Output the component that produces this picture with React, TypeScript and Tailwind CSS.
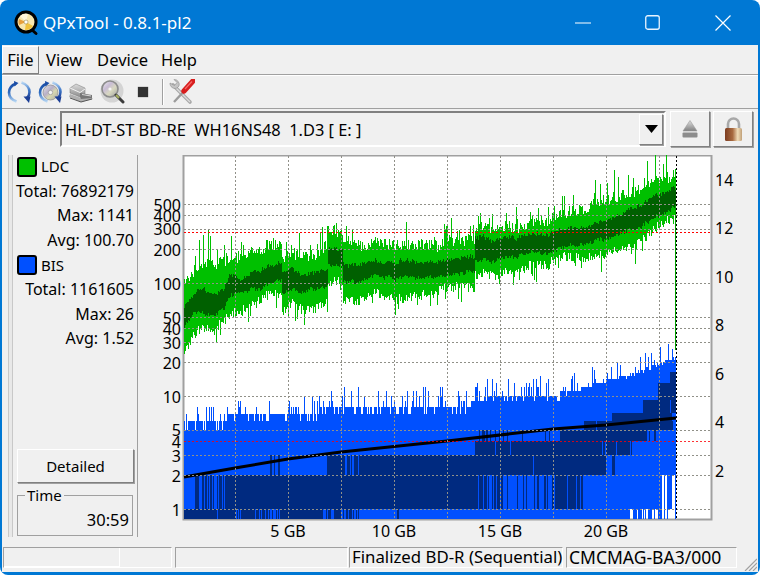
import { useId } from "react";

// seeded so the traces stay the same on every load
const makeRand = (seed: number) => () => {
  seed |= 0;
  seed = (seed + 0x6d2b79f5) | 0;
  let t = Math.imul(seed ^ (seed >>> 15), 1 | seed);
  t = (t + Math.imul(t ^ (t >>> 7), 61 | t)) ^ t;
  return ((t ^ (t >>> 14)) >>> 0) / 4294967296;
};

const lerp = (keys: number[][], x: number, col: number) => {
  for (let i = 1; i < keys.length; i++) {
    if (x <= keys[i][0]) {
      const a = keys[i - 1];
      const b = keys[i];
      const f = b[0] === a[0] ? 1 : (x - a[0]) / (b[0] - a[0]);
      return a[col] + (b[col] - a[col]) * f;
    }
  }
  return keys[keys.length - 1][col];
};

// x, dark top, dark bottom, light top, light bottom
const ldcKeys = [
  [184, 307, 328, 285, 354],
  [193, 297, 315, 272, 338],
  [203, 288, 312, 262, 328],
  [213, 295, 317, 265, 328],
  [223, 290, 309, 262, 322],
  [230, 273, 295, 255, 314],
  [240, 280, 292, 258, 312],
  [257, 270, 289, 250, 299],
  [277, 263, 280, 243, 289],
  [281, 263, 280, 243, 289],
  [282, 273, 294, 257, 315],
  [290, 268, 289, 253, 302],
  [303, 275, 292, 257, 309],
  [313, 273, 289, 257, 309],
  [327, 267, 285, 243, 302],
  [328, 247, 264, 228, 280],
  [342, 248, 264, 230, 280],
  [343, 263, 280, 240, 299],
  [360, 263, 280, 245, 300],
  [377, 263, 277, 243, 293],
  [400, 262, 278, 245, 300],
  [440, 262, 277, 245, 290],
  [474, 258, 274, 240, 288],
  [475, 237, 260, 226, 274],
  [520, 238, 257, 228, 272],
  [560, 232, 250, 217, 260],
  [600, 220, 237, 200, 252],
  [640, 205, 227, 188, 242],
  [675, 187, 207, 174, 214],
];

const ldcSpikes: Record<number, number> = {
  203: 235, 208: 229, 327: 226, 331: 232, 470: 226, 481: 222, 492: 214, 506: 213, 530: 212,
  548: 207, 572: 206, 595: 180, 618: 177, 633: 178, 644: 178, 652: 182, 663: 164, 667: 172,
};

const blueBase = [
  [184, 5.4],
  [210, 6],
  [230, 6.6],
  [300, 7],
  [340, 8],
  [470, 8.4],
  [476, 9.4],
  [560, 10.5],
  [600, 13],
  [630, 15.5],
  [655, 19],
  [676, 22],
];

// dark blue bands: y top, y bottom, x from, x to, how often a column is filled
const blueBands = [
  [509, 519, 184, 270, 0.93],
  [509, 519, 270, 281, 0.45],
  [509, 519, 281, 323, 1],
  [509, 519, 323, 360, 0.45],
  [509, 519, 397, 399, 1],
  [475, 509, 184, 194, 0],
  [475, 509, 194, 225, 0.5],
  [475, 509, 225, 475, 1],
  [475, 509, 475, 500, 0.6],
  [475, 509, 500, 552, 0.2],
  [475, 509, 552, 583, 0.85],
  [455, 475, 270, 280, 0.6],
  [455, 475, 323, 328, 0.5],
  [455, 475, 328, 345, 0.96],
  [455, 475, 345, 360, 0.55],
  [455, 475, 360, 606, 0.98],
  [455, 475, 612, 617, 0.5],
  [441, 455, 475, 630, 0.98],
  [441, 455, 630, 635, 0.5],
  [430, 441, 478, 497, 0.6],
  [430, 441, 497, 560, 0.07],
  [430, 441, 560, 647, 1],
  [430, 441, 647, 658, 0.5],
  [421, 430, 584, 600, 0.95],
  [421, 430, 600, 673, 1],
  [413, 421, 612, 672, 1],
  [400, 413, 643, 676, 0.98],
  [383, 400, 658, 676, 1],
  [372, 383, 670, 676, 1],
];

const buildTraces = () => {
  const r = makeRand(77);
  let light = "";
  let dark = "";
  let blue = "";
  let navy = "";
  let wobble = 0;
  for (let x = 184; x < 676; x++) {
    // slow drift so the bands are not too even
    wobble = wobble * 0.9 + (r() - 0.5) * 2.4;
    let top = lerp(ldcKeys, x, 3) + wobble + (r() - 0.5) * 12;
    if (r() > 0.85) top -= r() * 24;
    if (ldcSpikes[x]) top = ldcSpikes[x];
    let bot = lerp(ldcKeys, x, 4) + wobble + (r() - 0.5) * 10;
    if (r() > 0.88) bot += r() * 16;
    const dTop = lerp(ldcKeys, x, 1) + wobble + (r() - 0.5) * 4;
    const dBot = lerp(ldcKeys, x, 2) + wobble + (r() - 0.5) * 4;
    light += `M${x + 0.5} ${Math.round(top)}V${Math.round(bot)}`;
    dark += `M${x + 0.5} ${Math.round(dTop)}V${Math.round(dBot)}`;

    const base = lerp(blueBase, x, 1);
    const roll = r();
    let v = base;
    if (roll < 0.2) v = base - 1;
    else if (roll > 0.75) v = base * (1 + r() * 0.45);
    if (x === 672) v = 26;
    const blueTop = Math.round(509 - 113 * Math.log10(Math.max(5, Math.round(v))));
    let blueBot = 519;
    if (x >= 630 && r() < 0.4) blueBot = 509;
    if (x >= 662 && r() < 0.55) blueBot = 475;
    blue += `M${x + 0.5} ${blueTop}V${blueBot}`;
    blueBands.forEach(([y0, y1, from, to, p]) => {
      if (x >= from && x < to && r() < p) navy += `M${x + 0.5} ${y0}V${y1}`;
    });
  }
  return { light, dark, blue, navy };
};

const traces = buildTraces();

const leftTicks = [
  [500, 205], [400, 216], [300, 229], [200, 250], [100, 284], [50, 318], [40, 329], [30, 343],
  [20, 363], [10, 397], [5, 430], [4, 442], [3, 456], [2, 476], [1, 510],
];
const rightTicks = [[14, 180], [12, 228], [10, 277], [8, 325], [6, 374], [4, 422], [2, 471]];
const bottomTicks = [[5, 288], [10, 394], [15, 500], [20, 606]];
const gridY = [204, 215, 229, 249, 283, 317, 328, 342, 362, 396, 430, 455, 475, 509];
const gridX = [235, 288, 341, 394, 447, 500, 553, 606, 659];

const Chart = () => (
  <svg viewBox="140 155 616 385" className="w-[616px] h-[385px] block" fontSize={16}>
    <rect x={183.5} y={155.5} width={528} height={364} fill="#ffffff" stroke="#a0a0a0" strokeWidth={2} />
    <g shapeRendering="crispEdges" fill="none">
      <path d={traces.light} stroke="#00c000" />
      <path d={traces.dark} stroke="#006000" />
      <path d="M675.5 205V350" stroke="#00a000" />
      <path d={traces.blue} stroke="#0050ff" />
      <path d={traces.navy} stroke="#002a80" />
    </g>
    <path
      d="M184 477L235 468L288 459L341 452L447 441L553 429L606 425L676 418"
      fill="none"
      stroke="#000000"
      strokeWidth={3}
    />
    <g shapeRendering="crispEdges" stroke="#909088" strokeDasharray="2 2" fill="none">
      {gridY.map((y) => (
        <path key={y} d={`M184 ${y + 0.5}H711`} />
      ))}
      {gridX.map((x) => (
        <path key={x} d={`M${x + 0.5} 156V519`} />
      ))}
    </g>
    <g shapeRendering="crispEdges" stroke="#ff0000" strokeDasharray="2 2" fill="none">
      <path d="M184 232.5H711" />
      <path d="M184 441.5H711" strokeOpacity={0.8} />
    </g>
    <path d="M676.5 156V519" stroke="#000000" strokeDasharray="2 2" shapeRendering="crispEdges" />
    {leftTicks.map(([n, y]) => (
      <text key={n} x={181} y={y + 5.5} textAnchor="end">{n}</text>
    ))}
    {rightTicks.map(([n, y]) => (
      <text key={n} x={715} y={y + 5.5}>{n}</text>
    ))}
    {bottomTicks.map(([n, x]) => (
      <text key={n} x={x} y={536.5} textAnchor="middle">{n} GB</text>
    ))}
  </svg>
);

const AppLogo = () => (
  <svg width="26" height="26" viewBox="0 0 26 26" className="block">
    <path d="M17 19l5 4.5" stroke="#000" strokeWidth={3} strokeLinecap="round" />
    <circle cx="12" cy="12" r="10" fill="#f7e7b0" stroke="#000" strokeWidth={3} />
    <path d="M12 12L6 6A9 9 0 0 1 14 4Z" fill="#fff6dc" />
    <path d="M12 12L19 16A9 9 0 0 1 11 20Z" fill="#f0c23c" />
    <path d="M12 12L5 15A9 9 0 0 1 5 9Z" fill="#e8a03c" />
    <circle cx="12" cy="12" r="2" fill="#fff" stroke="#9a8a50" strokeWidth={0.6} />
  </svg>
);

const Arcs = () => {
  const id = useId();
  return (
    <>
      <defs>
        <linearGradient id={`${id}a`} x1="0" y1="0" x2="0" y2="1">
          <stop offset="0" stopColor="#1c4ea6" />
          <stop offset="0.5" stopColor="#2f6cc0" />
          <stop offset="1" stopColor="#b4d4f2" />
        </linearGradient>
        <linearGradient id={`${id}b`} x1="0" y1="0" x2="0" y2="1">
          <stop offset="0" stopColor="#b4d4f2" />
          <stop offset="0.5" stopColor="#3f78c8" />
          <stop offset="1" stopColor="#1c3f96" />
        </linearGradient>
      </defs>
      <path d="M9 3.5C4 5.5 2 9 2 12.5C2 16.5 5 20 9.5 21.5" fill="none" stroke={`url(#${id}a)`} strokeWidth={2.6} />
      <path d="M7 1L11.500 3L7.500 6.500Z" fill="#1c4ea6" />
      <path d="M14.5 2.5C19.5 4 22.5 8 22.5 12C22.5 14.5 21.5 16.5 20 18" fill="none" stroke={`url(#${id}b)`} strokeWidth={2.6} />
      <path d="M16.500 16.500L23.500 16.500L22 23Z" fill="#1c3f96" />
    </>
  );
};

const RefreshIcon = () => (
  <svg width="25" height="25" viewBox="0 0 25 25" className="block">
    <Arcs />
  </svg>
);

const DiscRefreshIcon = () => {
  const id = useId();
  return (
    <svg width="25" height="25" viewBox="0 0 25 25" className="block">
      <defs>
        <linearGradient id={id} x1="0" y1="0" x2="1" y2="1">
          <stop offset="0" stopColor="#e8e8e8" />
          <stop offset="0.4" stopColor="#b8b0c8" />
          <stop offset="0.6" stopColor="#d8d8b0" />
          <stop offset="1" stopColor="#a8a8a8" />
        </linearGradient>
      </defs>
      <circle cx="12.5" cy="12.5" r="7.5" fill={`url(#${id})`} stroke="#8a8a8a" strokeWidth={0.7} />
      <circle cx="12.5" cy="12.5" r="2.2" fill="#f4f4f4" stroke="#8a8a8a" strokeWidth={0.6} />
      <Arcs />
    </svg>
  );
};

const DriveIcon = () => {
  const id = useId();
  return (
    <svg width="26" height="25" viewBox="0 0 26 25" className="block">
      <defs>
        <linearGradient id={id} x1="0" y1="0" x2="0" y2="1">
          <stop offset="0" stopColor="#dcdcdc" />
          <stop offset="1" stopColor="#8c8c8c" />
        </linearGradient>
      </defs>
      <path d="M1 17l12 5 12-3-2-2-10 1-11-4Z" fill="#b0b0b0" />
      <path d="M2 8l6-4 9 4v6l-5 3-10-4Z" fill={`url(#${id})`} stroke="#777" strokeWidth={0.5} />
      <path d="M2 8l10 4.500 5-3.500" fill="none" stroke="#f2f2f2" strokeWidth={1} />
      <path d="M12 13l12 2v3l-11 1-1-2Z" fill="#767676" />
      <path d="M14 14.500l9 1.500" stroke="#d8d8d8" strokeWidth={1} />
      <path d="M2 18l11 4 11-3" fill="none" stroke="#555" strokeWidth={1} />
    </svg>
  );
};

const ScanIcon = () => {
  const id = useId();
  return (
    <svg width="26" height="26" viewBox="0 0 26 26" className="block">
      <defs>
        <linearGradient id={id} x1="0" y1="0" x2="1" y2="1">
          <stop offset="0" stopColor="#f4f4f4" />
          <stop offset="0.35" stopColor="#c8bcd4" />
          <stop offset="0.6" stopColor="#d8d8c0" />
          <stop offset="1" stopColor="#9c9c9c" />
        </linearGradient>
      </defs>
      <circle cx="13" cy="12" r="11.5" fill="#d4d4d4" />
      <circle cx="11" cy="10" r="8" fill={`url(#${id})`} stroke="#8c8c8c" strokeWidth={1.6} />
      <circle cx="11" cy="10" r="1.6" fill="#f4f4f4" />
      <path d="M17 16l7 7" stroke="#3c3c3c" strokeWidth={3} strokeLinecap="round" />
      <path d="M17 16l3 3" stroke="#a8b060" strokeWidth={2} />
    </svg>
  );
};

const ToolsIcon = () => (
  <svg width="26" height="26" viewBox="0 0 26 26" className="block">
    <path d="M4 6l17 17" stroke="#a8a8a8" strokeWidth={3.6} strokeLinecap="round" />
    <path d="M4 6l17 17" stroke="#dcdcdc" strokeWidth={1.2} />
    <path d="M1 4a5 5 0 0 0 7 5l2-2a5 5 0 0 0-5-6.500l3 3-2.500 3Z" fill="#c4c4c4" stroke="#8c8c8c" strokeWidth={0.6} />
    <path d="M19 8L5 23" stroke="#9c9c9c" strokeWidth={2.4} />
    <path d="M15 12L24 2" stroke="#d81e1e" strokeWidth={5.4} strokeLinecap="round" />
    <path d="M16 10L23 2.500" stroke="#f46a6a" strokeWidth={1.2} />
  </svg>
);

const EjectIcon = () => {
  const id = useId();
  return (
    <svg width="16" height="18" viewBox="0 0 16 18" className="block">
      <defs>
        <linearGradient id={id} x1="0" y1="0" x2="0" y2="1">
          <stop offset="0" stopColor="#e0e0e0" />
          <stop offset="1" stopColor="#808080" />
        </linearGradient>
      </defs>
      <path d="M8 0.500L15 11H1Z" fill={`url(#${id})`} stroke="#9a9a9a" strokeWidth={0.6} />
      <rect x="0.500" y="12.500" width="15" height="5" rx="1" fill="#8c8c8c" />
    </svg>
  );
};

const LockIcon = () => {
  const id = useId();
  return (
    <svg width="19" height="25" viewBox="0 0 19 25" className="block">
      <defs>
        <linearGradient id={id} x1="0" y1="0" x2="1" y2="0">
          <stop offset="0" stopColor="#7c3c20" />
          <stop offset="0.45" stopColor="#a86a40" />
          <stop offset="0.75" stopColor="#f0dcb8" />
          <stop offset="1" stopColor="#c0a078" />
        </linearGradient>
      </defs>
      <path d="M4 11V7a5.500 5.500 0 0 1 11 0v4" fill="none" stroke="#a8a8a8" strokeWidth={2.6} />
      <rect x="1" y="11" width="17" height="13" rx="1.500" fill={`url(#${id})`} />
    </svg>
  );
};

const StatRow = ({ label, value }: { label: string; value: string }) => (
  <div className="h-[24.6px] flex items-center justify-end pr-[3px] pb-[2px] whitespace-nowrap text-[16px]">
    {label}: {value}
  </div>
);

const LegendRow = ({ color, name }: { color: string; name: string }) => (
  <div className="h-[24.6px] flex items-center gap-[4px] pl-[4px] pb-[1px]">
    <div className={`w-[20px] h-[20px] rounded-[3px] border-2 border-black ${color}`} />
    <span>{name}</span>
  </div>
);

const raised = "border border-t-white border-l-white border-r-[#808080] border-b-[#808080] shadow-[1px_1px_0_#a0a0a0]";
const sunken = "border border-t-[#a0a0a0] border-l-[#a0a0a0] border-r-white border-b-white";

export default function App() {
  return (
    <div className="w-[760px] h-[575px] bg-white overflow-hidden font-['Noto_Sans',sans-serif] text-[15px] leading-none text-black">
      <div className="h-full rounded-[8px] bg-[#0078d4] flex flex-col px-[2px] pb-[3px]">
        {/* title bar */}
        <div className="h-[45px] shrink-0 flex items-center text-white">
          <div className="ml-[12px] mr-[3px]">
            <AppLogo />
          </div>
          <span className="text-[17px] pb-[1px]">QPxTool - 0.8.1-pl2</span>
          <div className="ml-auto flex items-center">
            <svg width="16" height="2" className="mr-[54px]">
              <rect width="16" height="1" y="0.5" fill="#fff" />
            </svg>
            <svg width="15" height="15" className="mr-[55px]" fill="none">
              <rect x="0.75" y="0.75" width="13.5" height="13.500" rx="2" stroke="#e8f4ff" strokeWidth={1.3} />
            </svg>
            <svg width="16" height="16" className="mr-[27px]" stroke="#fff" strokeWidth={1.2}>
              <path d="M0.5 0.5L15.500 15.500M15.500 0.500L0.500 15.500" />
            </svg>
          </div>
        </div>

        <div className="flex-1 min-h-0 bg-[#f0f0f0] flex flex-col relative">
          {/* menu */}
          <div className="h-[31px] shrink-0 flex items-center border-b border-b-white shadow-[inset_0_-1px_0_#a0a0a0] text-[16.500px]">
            <div className={`self-start mt-[1px] h-[28px] w-[37px] flex items-center justify-center ${raised} shadow-none`}>File</div>
            <span className="ml-[7px]">View</span>
            <span className="ml-[15px]">Device</span>
            <span className="ml-[13px]">Help</span>
          </div>

          {/* toolbar */}
          <div className="h-[33px] shrink-0 flex items-center border-b border-b-[#a0a0a0]">
            <div className="ml-[5px]"><RefreshIcon /></div>
            <div className="ml-[6px]"><DiscRefreshIcon /></div>
            <div className="ml-[5px]"><DriveIcon /></div>
            <div className="ml-[5px]"><ScanIcon /></div>
            <div className="w-[10px] h-[10px] ml-[13px] bg-[#333333] shadow-[0_0_1px_#555]" />
            <div className="w-[1px] h-[26px] ml-[14px] bg-[#a0a0a0] shadow-[1px_0_0_#fff]" />
            <div className="ml-[6px]"><ToolsIcon /></div>
          </div>

          {/* device row */}
          <div className="h-[46px] shrink-0 flex items-center pb-[6px]">
            <span className="ml-[3px] w-[55px] mt-[2px] text-[15.500px]">Device:</span>
            <div className="w-[606px] h-[36px] flex items-center border-2 border-t-[#808080] border-l-[#808080] border-r-white border-b-white">
              <span className="ml-[3px] mt-[2px] whitespace-pre text-[16.400px]">HL-DT-ST BD-RE  WH16NS48  1.D3 [ E: ]</span>
              <div className={`ml-auto mr-[1px] w-[24px] h-[31px] bg-[#f0f0f0] flex items-center justify-center ${raised}`}>
                <svg width="13" height="8">
                  <path d="M0 0H13L6.500 8Z" fill="#000" />
                </svg>
              </div>
            </div>
            <div className={`ml-[4px] w-[40px] h-[36px] flex items-center justify-center ${raised}`}>
              <EjectIcon />
            </div>
            <div className={`ml-[3px] w-[40px] h-[36px] flex items-center justify-center ${raised}`}>
              <LockIcon />
            </div>
          </div>

          {/* main */}
          <div className="h-[385px] shrink-0 flex">
            <div className="ml-[6px] w-[5px] h-[382px] bg-[#e8e8e8] border-x border-[#c8c8c8]" />
            <div className="w-[125px] h-[382px] border-r border-[#a0a0a0] flex flex-col">
              <LegendRow color="bg-[#00c000]" name="LDC" />
              <StatRow label="Total" value="76892179" />
              <StatRow label="Max" value="1141" />
              <StatRow label="Avg" value="100.70" />
              <LegendRow color="bg-[#0050ff]" name="BIS" />
              <StatRow label="Total" value="1161605" />
              <StatRow label="Max" value="26" />
              <StatRow label="Avg" value="1.52" />
              <div className={`mt-auto mb-[12px] ml-[4px] w-[117px] h-[34px] flex items-center justify-center ${raised}`}>
                Detailed
              </div>
              <div className="mb-[1px] ml-[4px] w-[116px] h-[41px] border border-[#a0a0a0] relative flex items-end justify-end pr-[3px] pb-[7px] text-[16.500px]">
                <span className="absolute left-[7px] -top-[8px] bg-[#f0f0f0] px-[2px] text-[15px]">Time</span>
                30:59
              </div>
            </div>
            <div className="ml-[2px]">
              <Chart />
            </div>
          </div>

          {/* status bar */}
          <div className="mt-[7px] h-[21px] shrink-0 flex text-[16.800px]">
            <div className={`ml-[1px] w-[169px] ${sunken}`}>
              <div className="w-[116px] h-full border-r border-b border-white" />
            </div>
            <div className={`ml-[3px] w-[173px] ${sunken}`} />
            <div className={`ml-[1px] w-[214px] flex items-center pl-[2px] whitespace-nowrap ${sunken}`}>
              Finalized BD-R (Sequential)
            </div>
            <div className={`ml-[3px] w-[171px] flex items-center pl-[2px] whitespace-nowrap ${sunken}`}>
              <span className="text-[17.500px]">CMCMAG-BA3/000</span>
            </div>
            <svg width="13" height="13" className="ml-auto self-end -mb-[3px] mr-[1px]" stroke="#a0a0a0" strokeWidth={1.2}>
              <path d="M1 13L13 1M5 13L13 5M9 13L13 9" />
            </svg>
          </div>
        </div>
      </div>
    </div>
  );
}
